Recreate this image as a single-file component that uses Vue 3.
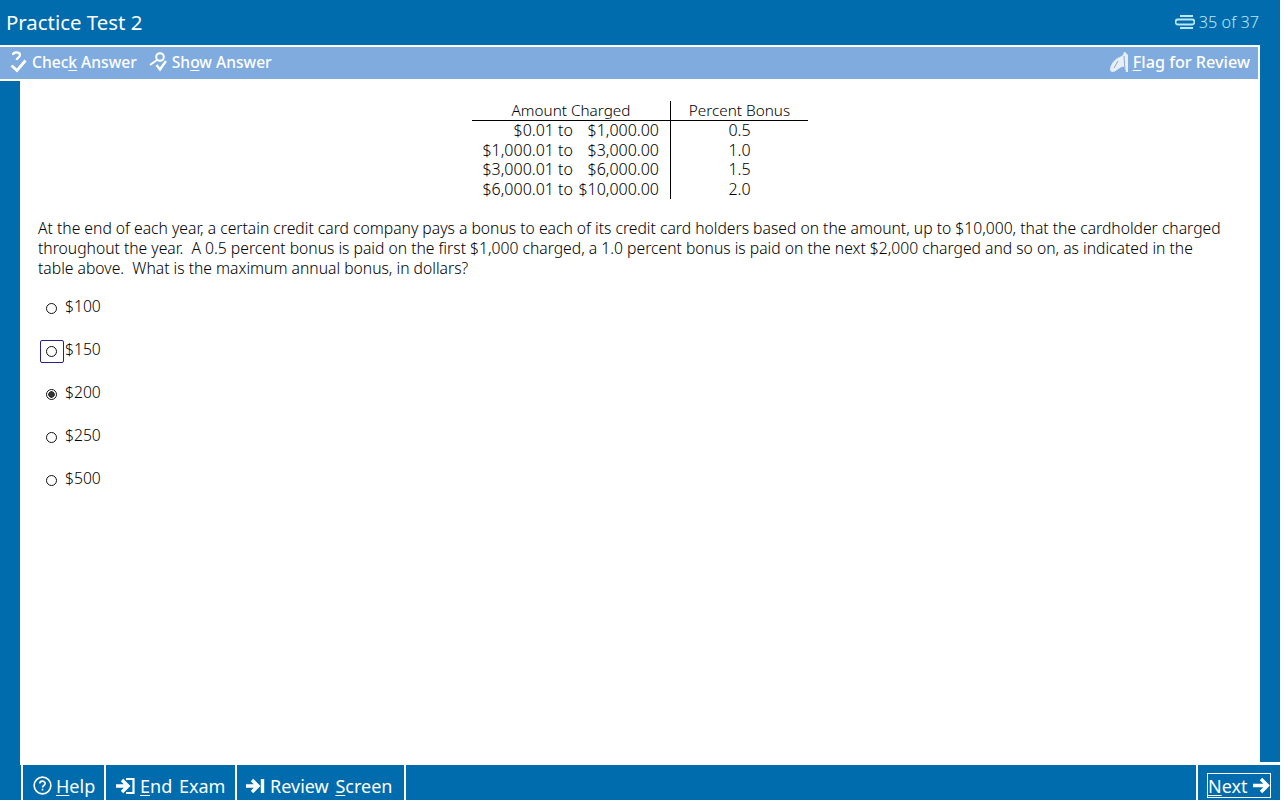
<script setup>
const rows = [
  ['$0.01 to', '$1,000.00', '0.5'],
  ['$1,000.01 to', '$3,000.00', '1.0'],
  ['$3,000.01 to', '$6,000.00', '1.5'],
  ['$6,000.01 to', '$10,000.00', '2.0']
]
const choices = [
  { label: '$100' },
  { label: '$150', focused: true },
  { label: '$200', checked: true },
  { label: '$250' },
  { label: '$500' }
]
</script>

<template>
  <div class="screen">
    <header class="title">
      <span class="test-name">Practice Test 2</span>
      <span class="count">
        <svg width="20" height="16" viewBox="0 0 20 16" fill="none" stroke="#b8e8fa" stroke-width="1.8">
          <path d="M5 2h13M3 5.500h14a2.500 2.500 0 0 1 0 5H3a2.500 2.500 0 0 1 0-5zM5 14h13" />
        </svg>
        35 of 37
      </span>
    </header>

    <div class="toolbar">
      <div class="tool-left">
        <span class="tool check">
          <svg width="17" height="22" viewBox="0 0 17 22" fill="none" stroke="#fff">
            <path d="M3 4C3 .5 10 .5 10 4 10 6.500 7 6.500 6.500 9" stroke-width="2.200" />
            <path d="M1.500 14.500 7 19.500 15.500 9.500" stroke-width="2.800" />
          </svg>
          <span>Chec<u>k</u> Answer</span>
        </span>
        <span class="tool show">
          <svg width="18" height="22" viewBox="0 0 18 22" fill="none" stroke="#fff">
            <circle cx="11" cy="6" r="3.800" stroke-width="2" />
            <path d="M8 9 1 14" stroke-width="2" />
            <path d="M7.500 14 11 18.500 17 10" stroke-width="2.400" />
          </svg>
          <span>Sh<u>o</u>w Answer</span>
        </span>
      </div>
      <span class="tool flag">
        <svg width="19" height="20" viewBox="0 0 19 20">
          <path d="M0 17C1 11 6 6 10 5l3-2 1-3h1l3 3v17h-2l-2-5c-4-1-6 4-11 5-2 0-3-1-3-3z" fill="#e6eef8" />
          <path d="M14 4l1 15M8 9l-4 7" stroke="#8fa9cc" stroke-width="1" fill="none" />
        </svg>
        <span><u>F</u>lag for Review</span>
      </span>
    </div>

    <main class="content">
      <table class="rates">
        <thead>
          <tr>
            <th class="amount" colspan="2">Amount Charged</th>
            <th class="bonus">Percent Bonus</th>
          </tr>
        </thead>
        <tbody>
          <tr v-for="r in rows" :key="r[0]">
            <td class="from">{{ r[0] }}</td>
            <td class="to">{{ r[1] }}</td>
            <td class="bonus">{{ r[2] }}</td>
          </tr>
        </tbody>
      </table>

      <p class="question">At the end of each year, a certain credit card company pays a bonus to each of its credit card holders based on the amount, up to $10,000, that the cardholder charged throughout the year.&nbsp; A 0.5 percent bonus is paid on the first $1,000 charged, a 1.0 percent bonus is paid on the next $2,000 charged and so on, as indicated in the table above.&nbsp; What is the maximum annual bonus, in dollars?</p>

      <div class="choices">
        <div v-for="c in choices" :key="c.label" class="choice">
          <span class="radio-box" :class="{ focused: c.focused }">
            <span class="radio" :class="{ checked: c.checked }"></span>
          </span>
          <span class="choice-label">{{ c.label }}</span>
        </div>
      </div>
    </main>

    <footer class="bottom">
      <div class="nav-left">
        <span class="nav-btn help">
          <svg width="19" height="19" viewBox="0 0 20 20" fill="none" stroke="#fff" stroke-width="1.700">
            <circle cx="10" cy="10" r="8.800" />
            <path d="M7.200 8c0-3.400 5.600-3.400 5.600 0 0 2-2.800 2-2.800 4" />
            <path d="M10 13.400v1.800" />
          </svg>
          <span><u>H</u>elp</span>
        </span>
        <span class="nav-btn end">
          <svg width="19" height="18" viewBox="0 0 19 18" fill="none" stroke="#fff">
            <path d="M0 9h11M6 3l6 6-6 6" stroke-width="3.400" />
            <path d="M10 2h7.500v14H10" stroke-width="2.200" />
          </svg>
          <span><u>E</u>nd Exam</span>
        </span>
        <span class="nav-btn review">
          <svg width="19" height="18" viewBox="0 0 19 18" fill="none" stroke="#fff">
            <path d="M0 9h11M6 3l6 6-6 6" stroke-width="3.400" />
            <path d="M16.500 2v14" stroke-width="3.400" />
          </svg>
          <span>Review <u>S</u>creen</span>
        </span>
      </div>
      <div class="nav-right">
        <span class="next">
          <span><u>N</u>ext</span>
          <svg width="17" height="17" viewBox="0 0 17 17" fill="none" stroke="#fff" stroke-width="3.400">
            <path d="M0 8.500h14M8 2l6.500 6.500L8 15" />
          </svg>
        </span>
      </div>
    </footer>
  </div>
</template>

<style>
html, body { margin: 0; background: #fff; }
</style>

<style scoped>
.screen {
  width: 1280px;
  height: 800px;
  display: flex;
  flex-direction: column;
  background: #006cae;
  font-family: "Noto Sans", "Open Sans", sans-serif;
  overflow: hidden;
}
u { text-underline-offset: 2px; }
svg { flex: none; }
.title {
  height: 45px;
  box-sizing: border-box;
  display: flex;
  align-items: center;
  justify-content: space-between;
  padding: 0 21px 2px 6px;
  color: #fff;
}
.test-name { font-size: 20.400px; }
.count {
  display: flex;
  align-items: center;
  gap: 4px;
  font-size: 16.300px;
  font-weight: 300;
  color: #b8e8fa;
}
.toolbar {
  width: 1258px;
  height: 32px;
  border-top: 2px solid #fff;
  border-right: 2px solid #fff;
  border-bottom: 2px solid #fff;
  background: #80abdf;
  box-sizing: content-box;
  display: flex;
  align-items: center;
  justify-content: space-between;
  color: #fff;
  font-size: 15.600px;
  font-weight: 500;
}
.tool-left { display: flex; padding-left: 10px; }
.tool { display: flex; align-items: center; padding-bottom: 2px; }
.check { gap: 5px; }
.show { gap: 5px; margin-left: 12px; }
.flag { gap: 4px; padding-right: 8px; font-size: 16.200px; }
.content {
  flex: 1;
  margin: 0 20px -3px;
  padding-top: 20px;
  background: #fff;
  color: #000;
  font-size: 15.700px;
  font-weight: 300;
  line-height: 20px;
}
.rates {
  margin: 0 auto;
  border-collapse: collapse;
  font-size: 16px;
  line-height: 19.500px;
}
.rates th { height: 19px; padding: 0; font-size: 15.300px; font-weight: 300; line-height: 19px; border-bottom: 1px solid #000; }
.rates td { padding: 0; }
.rates .amount { width: 198px; border-right: 1px solid #000; }
.rates .bonus { width: 137px; text-align: center; }
.rates .from { text-align: right; width: 101px; }
.rates .to { text-align: right; padding-right: 11px; border-right: 1px solid #000; }
.question { margin: 19px 30px 0 18px; }
.choices { margin: 9px 0 0 18px; }
.choice {
  height: 43px;
  display: flex;
  align-items: center;
  gap: 1px;
}
.choice-label { padding-bottom: 6px; }
.radio-box {
  box-sizing: border-box;
  width: 24px;
  height: 23px;
  margin-left: 2px;
  padding-right: 1px;
  display: flex;
  align-items: center;
  justify-content: center;
  border: 1px solid transparent;
  border-radius: 2px;
}
.radio-box.focused { border-color: #22228a; }
.radio {
  box-sizing: border-box;
  width: 11px;
  height: 11px;
  border: 1.500px solid #111;
  border-radius: 50%;
  background: #fff;
}
.radio.checked { background: radial-gradient(circle, #333 0 3px, #fff 3.500px); }
.bottom {
  height: 38px;
  box-sizing: border-box;
  margin-left: 21px;
  display: flex;
  justify-content: space-between;
  border-top: 3px solid #fff;
  color: #fff;
  font-size: 18px;
  word-spacing: 2px;
  position: relative;
}
.nav-left { display: flex; }
.nav-btn {
  box-sizing: border-box;
  display: flex;
  align-items: center;
  gap: 5px;
  border-left: 2px solid #fff;
  padding-top: 6px;
}
.help { width: 83px; padding-left: 10px; gap: 4px; }
.end { width: 131px; padding-left: 10px; }
.review { width: 171px; padding-left: 9px; border-right: 2px solid #fff; }
.nav-right {
  width: 84px;
  box-sizing: border-box;
  border-left: 2px solid #fff;
  padding: 8px 0 0 9px;
}
.next {
  box-sizing: border-box;
  width: 64px;
  height: 25px;
  display: flex;
  align-items: center;
  gap: 5px;
  border: 1px solid #fff;
}
</style>
